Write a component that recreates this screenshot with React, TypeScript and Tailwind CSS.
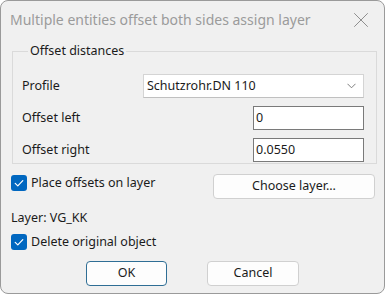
import { X } from 'lucide-react';

function Check() {
  return (
    <span className="flex h-[16px] w-[16px] shrink-0 items-center justify-center rounded-[3px] bg-[#0067c0]">
      <svg width="16" height="16" viewBox="0 0 16 16" fill="none">
        <path d="M4.2 8.4 L6.8 10.9 L11.8 5.6" stroke="white" strokeWidth="1.2" strokeLinecap="round" strokeLinejoin="round" />
      </svg>
    </span>
  );
}

export default function App() {
  return (
    <div className="h-[297px] w-[385px] bg-white font-['Noto_Sans',sans-serif] text-[12.5px] text-[#1b1b1b]">
      <div className="flex h-[294px] w-[385px] flex-col rounded-[8px] border border-[#9a9a9a] bg-[#f0f0f0]">
        {/* title bar */}
        <div className="flex h-[37px] shrink-0 items-center justify-between pl-[9px] pr-[10px]">
          <span className="text-[14px] leading-none text-[#9b9b9b]">Multiple entities offset both sides assign layer</span>
          <X size={26} strokeWidth={0.9} className="text-[#8c8c8c]" />
        </div>

        <fieldset className="ml-[11px] mr-[7px] mt-[5px] border border-[#dadada] pb-[1px] pl-[9px] pr-[12px] pt-[15px]">
          <legend className="ml-[6px] px-[2px] leading-[16px]">Offset distances</legend>
          <div className="flex flex-col gap-[8px]">
            <div className="flex h-[24px] items-center">
              <span className="w-[121px]">Profile</span>
              <div className="flex h-[24px] flex-1 items-center justify-between border border-[#d4d4d4] border-b-[#c0c0c0] bg-white pl-[3px] pr-[7px]">
                <span>Schutzrohr.DN 110</span>
                <svg width="9" height="6" viewBox="0 0 9 6" fill="none">
                  <path d="M0.5 0.8 L4.5 4.8 L8.5 0.8" stroke="#707070" strokeWidth="0.9" />
                </svg>
              </div>
            </div>
            <div className="flex h-[24px] items-center justify-between">
              <span>Offset left</span>
              <div className="flex h-[24px] w-[111px] items-center border border-[#7a7a7a] bg-white pl-[2px]">0</div>
            </div>
            <div className="flex h-[24px] items-center justify-between">
              <span>Offset right</span>
              <div className="flex h-[24px] w-[111px] items-center border border-[#7a7a7a] bg-white pl-[2px]">0.0550</div>
            </div>
          </div>
        </fieldset>

        <div className="mt-[10px] flex h-[25px] items-start justify-between pl-[10px] pr-[9px]">
          <label className="mt-[1px] flex items-center gap-[4px] leading-[16px]">
            <Check />
            Place offsets on layer
          </label>
          <button className="h-[25px] w-[162px] rounded-[4px] border border-[#d0d0d0] bg-[#fdfdfd]">Choose layer...</button>
        </div>

        <div className="mt-[11px] pl-[10px] leading-[16px]">Layer: VG_KK</div>

        <label className="mt-[8px] flex items-center gap-[4px] pl-[10px] leading-[16px]">
          <Check />
          Delete original object
        </label>

        <div className="mt-[11px] flex justify-center gap-[40px]">
          <button className="h-[25px] w-[81px] rounded-[4px] border border-[#2f6e95] bg-[#fdfdfd]">OK</button>
          <button className="h-[25px] w-[92px] rounded-[4px] border border-[#d0d0d0] bg-[#fdfdfd]">Cancel</button>
        </div>
      </div>
    </div>
  );
}
